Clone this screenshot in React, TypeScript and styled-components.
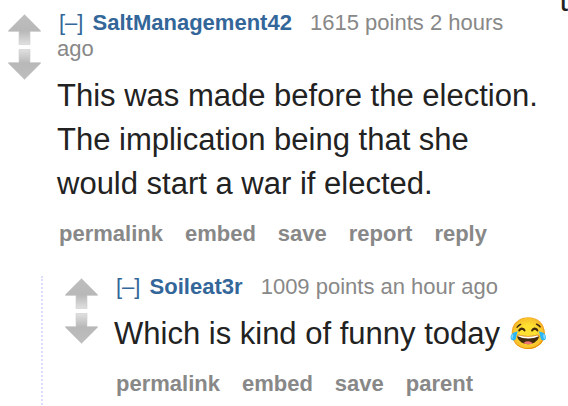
import React, { useId } from "react";
import styled, { createGlobalStyle } from "styled-components";

const GlobalStyle = createGlobalStyle`
  * { box-sizing: border-box; }
  body {
    margin: 0;
    background: #fff;
    color: #222;
    font-family: "Liberation Sans", Arial, sans-serif;
    overflow: hidden;
  }
`;

const Page = styled.main`
  position: relative;
  padding: 10px 20px 0 8px;
`;

const CutText = styled.span`
  position: absolute;
  top: -17px;
  right: 0;
  font-size: 31px;
  line-height: 36px;
`;

const CommentRow = styled.article`
  display: flex;
  align-items: flex-start;
  gap: 16px;
`;

const Votes = styled.div<{ $nested?: boolean }>`
  display: flex;
  flex: none;
  flex-direction: column;
  gap: 2px;
  padding-top: ${(p) => (p.$nested ? 2 : 4)}px;
`;

const VoteButton = styled.button`
  display: block;
  width: 33px;
  height: 32px;
  padding: 0;
  border: 0;
  background: none;
  cursor: pointer;

  svg { display: block; }
`;

const Entry = styled.div`
  flex: 1;
  min-width: 0;
`;

const Tagline = styled.header<{ $nested?: boolean }>`
  padding-right: 12px;
  color: #888;
  font-size: 22px;
  line-height: ${(p) => (p.$nested ? 22 : 26)}px;

  a {
    color: #369;
    text-decoration: none;
  }
`;

const Toggle = styled.a`
  padding: 0 2px;
`;

const Author = styled.a`
  margin: 0 12px 0 1px;
  font-weight: bold;
`;

const Body = styled.p<{ $nested?: boolean }>`
  margin: ${(p) => (p.$nested ? 14 : 12)}px 0 15px;
  font-size: 31px;
  line-height: 44px;
`;

const Actions = styled.ul`
  display: flex;
  gap: 22px;
  margin: 0;
  padding: 0 2px;
  list-style: none;
  font-size: 22px;
  line-height: 26px;

  a {
    color: #888;
    font-weight: bold;
    text-decoration: none;
  }
`;

const Replies = styled.section`
  margin: 29px 0 0 33px;
  padding: 0 0 24px 22px;
  border-left: 2px dotted #ddf;
`;

function Arrow({ down }: { down?: boolean }) {
  const id = useId();
  return (
    <svg width="33" height="32" viewBox="0 0 33 32" aria-hidden="true">
      <defs>
        <linearGradient id={id} x1="0" y1="0" x2="0" y2="1">
          <stop offset="0" stopColor="#bebebe" />
          <stop offset="0.55" stopColor="#b8b8b8" />
          <stop offset="1" stopColor="#e0e0e0" />
        </linearGradient>
      </defs>
      <path
        d="M16.5 0.5 L32.5 16.5 V17.5 H22 V30.5 H11 V17.5 H0.5 V16.5 Z"
        fill={`url(#${id})`}
        stroke="#cccccc"
        strokeWidth="0.6"
        strokeLinejoin="round"
        transform={down ? "matrix(1 0 0 -1 0 32)" : undefined}
      />
    </svg>
  );
}

type CommentProps = {
  author: string;
  stats: string;
  text: string;
  actions: string[];
  nested?: boolean;
};

function Comment({ author, stats, text, actions, nested }: CommentProps) {
  return (
    <CommentRow>
      <Votes $nested={nested}>
        <VoteButton type="button" aria-label="upvote"><Arrow /></VoteButton>
        <VoteButton type="button" aria-label="downvote"><Arrow down /></VoteButton>
      </Votes>
      <Entry>
        <Tagline $nested={nested}>
          <Toggle href="#">[–]</Toggle> <Author href="#">{author}</Author> {stats}
        </Tagline>
        <Body $nested={nested}>{text}</Body>
        <Actions>
          {actions.map((action) => (
            <li key={action}><a href="#">{action}</a></li>
          ))}
        </Actions>
      </Entry>
    </CommentRow>
  );
}

export default function App() {
  return (
    <>
      <GlobalStyle />
      <Page>
        <CutText>t</CutText>
        <Comment
          author="SaltManagement42"
          stats="1615 points 2 hours ago"
          text="This was made before the election. The implication being that she would start a war if elected."
          actions={["permalink", "embed", "save", "report", "reply"]}
        />
        <Replies>
          <Comment
            author="Soileat3r"
            stats="1009 points an hour ago"
            text="Which is kind of funny today 😂"
            actions={["permalink", "embed", "save", "parent"]}
            nested
          />
        </Replies>
      </Page>
    </>
  );
}
